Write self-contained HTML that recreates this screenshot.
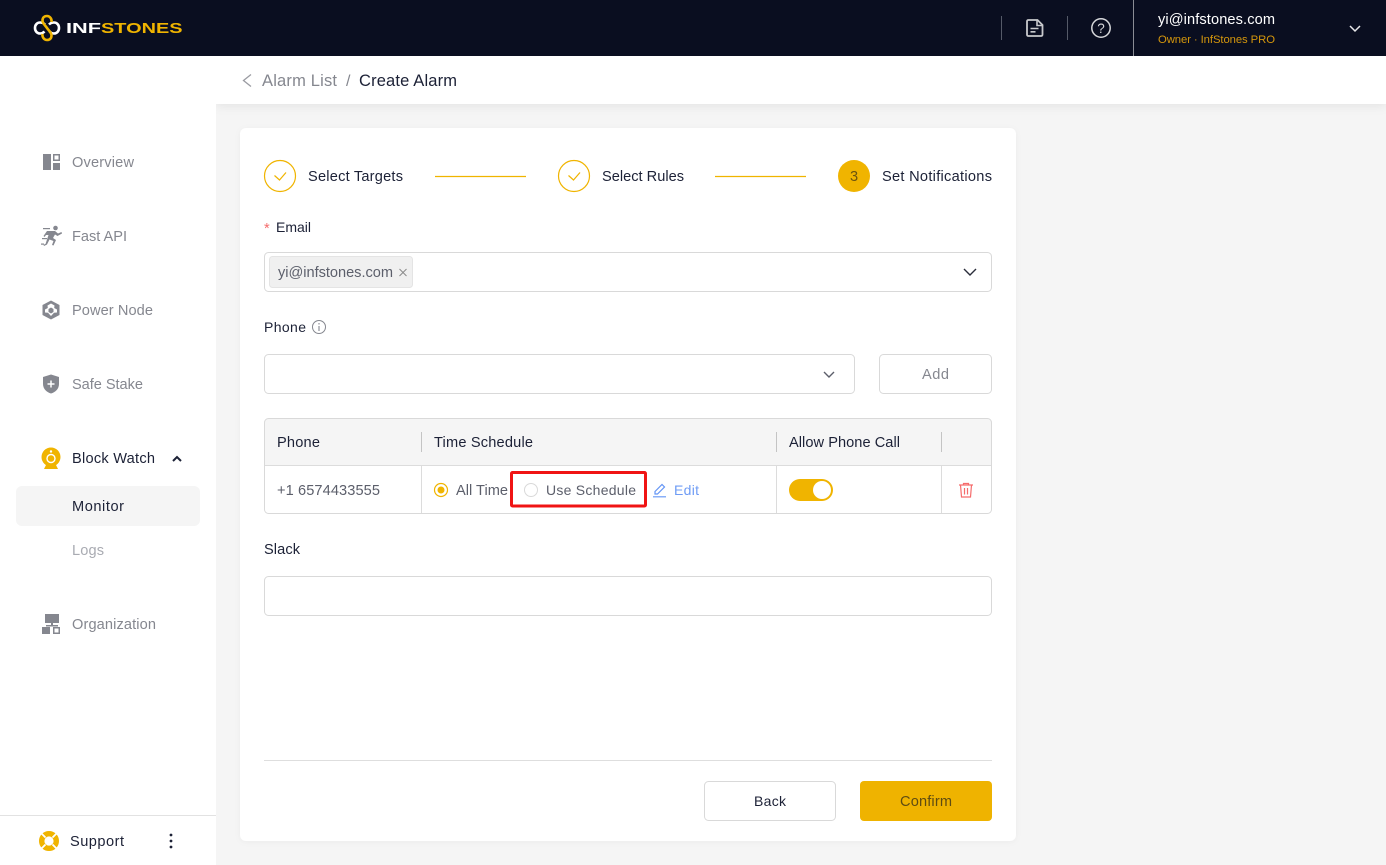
<!DOCTYPE html>
<html lang="en"><head><meta charset="utf-8"><title>Create Alarm</title>
<style>
html,body{margin:0;padding:0;width:1386px;height:865px;overflow:hidden;background:#f5f5f5}
svg{display:block;position:absolute;left:0;top:0}
text{font-family:"Liberation Sans",sans-serif;font-size:14.600px;fill:#1c2136}
.n{fill:#85878f}.g{fill:#5c5f6b}
</style></head><body>
<svg width="1386" height="865" viewBox="0 0 1386 865" xmlns="http://www.w3.org/2000/svg">
<defs>
<filter id="sh" x="-5%" y="-30%" width="110%" height="170%"><feDropShadow dx="0" dy="2" stdDeviation="5" flood-color="#000" flood-opacity=".07"/></filter>
<filter id="sc" x="-5%" y="-5%" width="110%" height="110%"><feDropShadow dx="0" dy="1" stdDeviation="3" flood-color="#000" flood-opacity=".04"/></filter>
</defs>
<rect width="1386" height="865" fill="#f5f5f5"/>
<!-- top bar -->
<rect x="216" y="56" width="1170" height="48" fill="#fff" filter="url(#sh)"/>
<!-- sidebar -->
<rect x="0" y="56" width="216" height="809" fill="#fff"/>
<rect x="0" y="815" width="216" height="1" fill="#e2e2e2"/>
<!-- header -->
<rect width="1386" height="56" fill="#0a0e20"/>
<g fill="none" stroke-width="2.600">
<path d="M45 24.500C43.500 23 42 22.500 40 22.500C37 22.500 35 25 35 28C35 31 37 33.500 40 33.500C42 33.500 43.500 32.500 44.500 31.500M49 24.500C50.500 23 52 22.500 54 22.500C57 22.500 59 25 59 28C59 31 57 33.500 54 33.500C52 33.500 50.500 32.500 49.500 31.500" stroke="#fff"/>
<path d="M51.500 22C52 19 50 16 47 16C44 16 42.500 18 42.500 20.500C42.500 23.500 45 25 47 28C49 31 51.500 32.500 51.500 35.500C51.500 38 50 40 47 40C44 40 42 37 42.500 34" stroke="#f0b400"/>
</g>
<text x="66" y="33" style="font-size:15px;font-weight:700;fill:#fff" textLength="35" lengthAdjust="spacingAndGlyphs">INF</text>
<text x="101" y="33" style="font-size:15px;font-weight:700;fill:#f0b400" textLength="81.500" lengthAdjust="spacingAndGlyphs">STONES</text>
<g fill="#555a68"><rect x="1001" y="16" width="1" height="24"/><rect x="1067" y="16" width="1" height="24"/></g>
<rect x="1133" y="0" width="1" height="56" fill="#8a8c94"/>
<path d="M1028.500 20H1037.500L1042.500 25V34.500Q1042.500 36 1041 36H1028.500Q1027 36 1027 34.500V21.500Q1027 20 1028.500 20Z" fill="none" stroke="#c8c9cc" stroke-width="1.800"/>
<path d="M1037 20.500V25.500H1042M1030.500 28.500H1038.500M1030.500 31.800H1035.500" fill="none" stroke="#c8c9cc" stroke-width="1.600"/>
<circle cx="1101" cy="28" r="9.200" fill="none" stroke="#d6d7da" stroke-width="1.500"/>
<text x="1101" y="33" text-anchor="middle" style="font-size:13.500px;fill:#d6d7da">?</text>
<text x="1158" y="24" style="fill:#fff" textLength="117">yi@infstones.com</text>
<text x="1158" y="43" style="font-size:11.300px;fill:#d4960c" textLength="117">Owner · InfStones PRO</text>
<path d="M1350 26L1355 31L1360 26" fill="none" stroke="#e8e8ea" stroke-width="1.500"/>
<!-- breadcrumb -->
<path d="M251 74.500L243.500 80.500L251 86.500" fill="none" stroke="#9a9ba2" stroke-width="1.300"/>
<text x="262" y="86" class="n" style="font-size:16.500px" textLength="75">Alarm List</text>
<text x="346" y="86" class="n" style="font-size:16px">/</text>
<text x="359" y="86" style="font-size:16.500px" textLength="98">Create Alarm</text>
<!-- sidebar nav -->
<g fill="#85878f">
<rect x="43" y="154" width="8" height="16"/><rect x="53" y="163" width="7" height="7"/>
<path fill-rule="evenodd" d="M53 154H60V161H53ZM54.500 155.500V159.500H58.500V155.500Z"/>
<circle cx="55.500" cy="228" r="2.300"/>
<path d="M47 231L55 231L58 233.500L61.500 232L62 233.500L57.500 236L55 234.500L53 238L56 240L53.500 245.500L52 245L53.500 241L49.500 239.500L47 244.500L44 246L43.500 244.800L45.500 244L48.500 235L46 235L44.500 237L43.500 236Z"/>
<rect x="43" y="228" width="7" height="1.200"/><rect x="42" y="238" width="5" height="1.200"/><rect x="41" y="243.500" width="3" height="1.200"/>
<path fill-rule="evenodd" d="M51 300.500L59.500 305V315L51 319.500L42.500 315V305ZM51 303.500L47.500 305.500L47.800 308L45 309.500L45 312.500L48 312.800L51 316L54 312.800L57 312.500V309.500L54.200 308L54.500 305.500ZM51 307.500L53.500 309V312L51 313.500L48.500 312V309Z"/>
<path d="M51 374.500L59 377V384C59 389 55 392.500 51 393.500C47 392.500 43 389 43 384V377Z"/>
<rect x="45" y="614" width="14" height="9"/><rect x="51" y="623" width="2" height="3"/><rect x="46" y="625" width="12" height="1.500"/>
<rect x="42" y="627" width="8" height="7"/>
<path fill-rule="evenodd" d="M53 627H60V634H53ZM54.500 628.500V632.500H58.500V628.500Z"/>
</g>
<path d="M51 380.500V387.500M47.500 384H54.500" stroke="#fff" stroke-width="1.500"/>
<path d="M44 469H58L56 465H46Z" fill="#f0b400"/>
<circle cx="51" cy="457" r="9.500" fill="#f0b400"/>
<circle cx="51" cy="458.500" r="4" fill="none" stroke="#fff" stroke-width="1.400"/>
<circle cx="51" cy="451.500" r="1.200" fill="#fff"/>
<text x="72" y="167" class="n" textLength="62">Overview</text>
<text x="72" y="241" class="n" textLength="55">Fast API</text>
<text x="72" y="315" class="n" textLength="81">Power Node</text>
<text x="72" y="389" class="n" textLength="71">Safe Stake</text>
<text x="72" y="463" textLength="83">Block Watch</text>
<path d="M173 461L177 457L181 461" fill="none" stroke="#1c2136" stroke-width="2"/>
<rect x="16" y="486" width="184" height="40" rx="6" fill="#f5f5f5"/>
<text x="72" y="511" textLength="52">Monitor</text>
<text x="72" y="555" style="fill:#a9abb2" textLength="32">Logs</text>
<text x="72" y="629" class="n" textLength="84">Organization</text>
<!-- support -->
<circle cx="49" cy="841" r="7.300" fill="none" stroke="#f0b400" stroke-width="5.400"/>
<path d="M41 833L45.500 837.500M57 833L52.500 837.500M41 849L45.500 844.500M57 849L52.500 844.500" stroke="#fff" stroke-width="1.800"/>
<text x="70" y="846" textLength="54">Support</text>
<g fill="#1c2136"><circle cx="171" cy="835" r="1.400"/><circle cx="171" cy="841" r="1.400"/><circle cx="171" cy="847" r="1.400"/></g>
<!-- card -->
<rect x="240" y="128" width="776" height="713" rx="6" fill="#fff" filter="url(#sc)"/>
<!-- steps -->
<g fill="none" stroke="#f0b400" stroke-width="1.200">
<circle cx="280" cy="176" r="15.500"/><circle cx="574" cy="176" r="15.500"/>
<path d="M274.500 175.500L279.500 180L286 172.500M568.500 175.500L573.500 180L580 172.500"/>
<path d="M435 176.500H526M715 176.500H806"/>
</g>
<circle cx="854" cy="176" r="16" fill="#f0b400"/>
<text x="854" y="181" text-anchor="middle" style="fill:#6b5410">3</text>
<text x="308" y="181" textLength="95">Select Targets</text>
<text x="602" y="181" textLength="82">Select Rules</text>
<text x="882" y="181" textLength="110">Set Notifications</text>
<!-- email -->
<text x="264" y="233" style="fill:#f56c6c">*</text>
<text x="276" y="232" style="font-size:14px" textLength="35">Email</text>
<rect x="264.500" y="252.500" width="727" height="39" rx="4" fill="#fff" stroke="#d9d9d9"/>
<rect x="269.500" y="256.500" width="143" height="31" rx="3" fill="#f0f0f0" stroke="#e4e4e4"/>
<text x="278" y="277" class="g" textLength="115">yi@infstones.com</text>
<path d="M399.500 269L406.500 276M406.500 269L399.500 276" stroke="#8a8a8a" stroke-width="1"/>
<path d="M964 269L970 275L976 269" fill="none" stroke="#2a2d3a" stroke-width="1.400"/>
<!-- phone -->
<text x="264" y="332" style="font-size:14px" textLength="42">Phone</text>
<circle cx="319" cy="327" r="6.500" fill="none" stroke="#85878f" stroke-width="1"/>
<path d="M319 326V331M319 323V324.500" stroke="#85878f" stroke-width="1.100"/>
<rect x="264.500" y="354.500" width="590" height="39" rx="4" fill="#fff" stroke="#d9d9d9"/>
<path d="M824 372L829 377L834 372" fill="none" stroke="#5c5f6b" stroke-width="1.400"/>
<rect x="879.500" y="354.500" width="112" height="39" rx="4" fill="#fff" stroke="#d9d9d9"/>
<text x="922" y="379" class="n" textLength="27">Add</text>
<!-- table -->
<path d="M264.500 465V422.500a4 4 0 0 1 4-4H987.500a4 4 0 0 1 4 4V465Z" fill="#f5f5f5"/>
<rect x="264.500" y="418.500" width="727" height="95" rx="4" fill="none" stroke="#d9d9d9"/>
<rect x="265" y="465" width="726" height="1" fill="#dcdcdc"/>
<g fill="#c4c4c4"><rect x="421" y="432" width="1" height="20"/><rect x="776" y="432" width="1" height="20"/><rect x="941" y="432" width="1" height="20"/></g>
<g fill="#dcdcdc"><rect x="421" y="466" width="1" height="47"/><rect x="776" y="466" width="1" height="47"/><rect x="941" y="466" width="1" height="47"/></g>
<text x="277" y="447" textLength="43">Phone</text>
<text x="434" y="447" textLength="99">Time Schedule</text>
<text x="789" y="447" textLength="111">Allow Phone Call</text>
<text x="277" y="495" class="g" textLength="103">+1 6574433555</text>
<circle cx="441" cy="490" r="6.500" fill="#fff" stroke="#f0b400" stroke-width="1.200"/>
<circle cx="441" cy="490" r="3.500" fill="#f0b400"/>
<text x="456" y="495" class="g" textLength="52">All Time</text>
<circle cx="531" cy="490" r="6.500" fill="#fff" stroke="#d9d9d9" stroke-width="1"/>
<text x="546" y="495" class="g" style="font-size:14px" textLength="90">Use Schedule</text>
<rect x="511.500" y="472.500" width="134" height="33.500" rx="1" fill="none" stroke="#f01414" stroke-width="3"/>
<path d="M655 491.500L662 484.500L664.500 487L657.500 494H655ZM653 496.800H666" fill="none" stroke="#6495f5" stroke-width="1.200"/>
<text x="674" y="495" style="fill:#6f9cf5;font-size:14px" textLength="25">Edit</text>
<rect x="789" y="479" width="44" height="22" rx="11" fill="#f0b400"/>
<circle cx="822" cy="490" r="9" fill="#fff"/>
<g fill="none" stroke="#f56c6c" stroke-width="1.200">
<path d="M959 485H973M963.500 485V483.500H968.500V485M960.500 485L961.500 497H970.500L971.500 485M964.500 488V494.500M967.500 488V494.500"/>
</g>
<!-- slack -->
<text x="264" y="554" textLength="36">Slack</text>
<rect x="264.500" y="576.500" width="727" height="39" rx="4" fill="#fff" stroke="#d9d9d9"/>
<rect x="264" y="760" width="728" height="1" fill="#dedede"/>
<rect x="704.500" y="781.500" width="131" height="39" rx="4" fill="#fff" stroke="#d9d9d9"/>
<text x="754" y="806" style="font-size:14px" textLength="32">Back</text>
<rect x="860" y="781" width="132" height="40" rx="4" fill="#efb300"/>
<text x="900" y="806" style="fill:#5f4c12" textLength="52">Confirm</text>
</svg>
</body></html>
